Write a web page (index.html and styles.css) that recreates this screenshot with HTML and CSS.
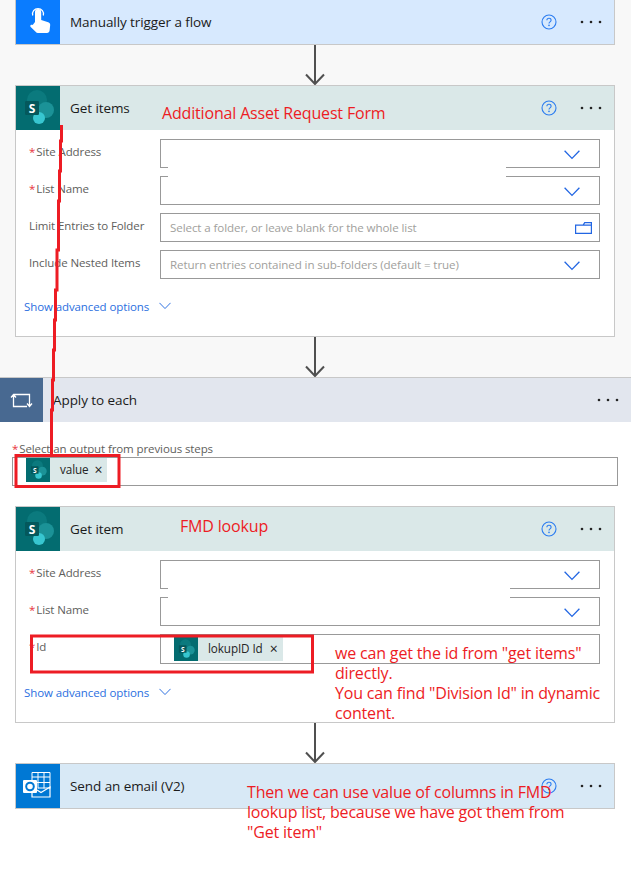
FILE: index.html
```html
<!DOCTYPE html>
<html lang="en">
<head>
<meta charset="utf-8">
<title>Flow</title>
<link rel="stylesheet" href="styles.css">
</head>
<body>
<svg class="defs" width="0" height="0" aria-hidden="true">
  <defs>
    <symbol id="sp" viewBox="0 0 44 44">
      <circle cx="21" cy="14" r="10" fill="#0b7a7e"/>
      <circle cx="30" cy="24" r="8" fill="#1b9297"/>
      <circle cx="23" cy="32" r="6" fill="#37c6d0"/>
      <rect x="9" y="15" width="14" height="14" rx="1.2" fill="#04585c"/>
      <text x="16" y="27" class="sp-s">S</text>
    </symbol>
    <symbol id="help" viewBox="0 0 16 16">
      <circle cx="8" cy="8" r="7" fill="none" stroke="#2b7cf0" stroke-width="1.1"/>
      <path d="M5.900 6.300c0-1.200.9-2 2.100-2s2.100.8 2.100 1.900c0 1.700-2.100 1.600-2.100 3.300" fill="none" stroke="#2b7cf0" stroke-width="1.100"/>
      <circle cx="8" cy="11.400" r=".8" fill="#2b7cf0"/>
    </symbol>
    <symbol id="chev" viewBox="0 0 16 10">
      <path d="M.6.8 8 8.400 15.400.8" fill="none" stroke="currentColor" stroke-width="1.300"/>
    </symbol>
    <symbol id="arrow" viewBox="0 0 20 40">
      <path d="M10 0v39M1 29.500 10 39l9-9.500" fill="none" stroke="#505050" stroke-width="2"/>
    </symbol>
  </defs>
</svg>

<main class="page">
  <section class="top">
    <article class="card card-first">
      <header class="head head-trigger">
        <span class="tile tile-trigger">
          <svg class="tile-svg" viewBox="0 0 44 44"><path d="M19 22V12a3.100 3.100 0 0 1 6.200 0v8l7 2.200c1.300.4 2 1.400 2 2.800l-.6 5.600c-.2 1.500-1.100 2.400-2.600 2.400H22c-1 0-1.800-.4-2.400-1.200L14.700 27c-.6-.8-.5-1.500 0-2s1.400-.5 2 0z" fill="#fff"/><path d="M16.700 15.500a5.500 5.500 0 1 1 10.600 0" fill="none" stroke="#fff" stroke-width="1.300"/></svg>
        </span>
        <h2 class="title">Manually trigger a flow</h2>
        <svg class="help"><use href="#help"/></svg>
        <span class="dots"><i></i><i></i><i></i></span>
      </header>
    </article>
    <svg class="arrow"><use href="#arrow"/></svg>

    <article class="card">
      <header class="head head-sp">
        <span class="tile tile-sp"><svg class="tile-svg"><use href="#sp"/></svg></span>
        <h2 class="title">Get items</h2>
        <svg class="help"><use href="#help"/></svg>
        <span class="dots"><i></i><i></i><i></i></span>
      </header>
      <div class="body body-long">
        <div class="row"><label class="label"><b>*</b>Site Address</label><div class="input"><svg class="chev"><use href="#chev"/></svg></div></div>
        <div class="row"><label class="label"><b>*</b>List Name</label><div class="input"><svg class="chev"><use href="#chev"/></svg></div></div>
        <div class="row"><label class="label">Limit Entries to Folder</label><div class="input"><span class="ph">Select a folder, or leave blank for the whole list</span>
          <svg class="folder" viewBox="0 0 17 12"><path d="M.6 11.400V3.100h7.500l1.600-2.400h6.700v10.700zM8.100 3.100h8.200" fill="none" stroke="#2266e3" stroke-width="1.200"/></svg></div></div>
        <div class="row"><label class="label">Include Nested Items</label><div class="input"><span class="ph">Return entries contained in sub-folders (default = true)</span><svg class="chev"><use href="#chev"/></svg></div></div>
        <a class="adv">Show advanced options<svg class="chev-small"><use href="#chev"/></svg></a>
      </div>
    </article>
    <svg class="arrow"><use href="#arrow"/></svg>
  </section>

  <section class="loop">
    <header class="loop-head">
      <span class="tile tile-loop">
        <svg class="tile-svg" viewBox="0 0 44 44"><path d="M13.500 17V28.500H27M11 19.500l2.500-3 2.500 3M14 16.500H29.500V28M27 25.500l2.500 3 2.500-3" fill="none" stroke="#fff" stroke-width="1.300"/></svg>
      </span>
      <h2 class="title title-loop">Apply to each</h2>
      <span class="dots"><i></i><i></i><i></i></span>
    </header>
    <div class="loop-body">
      <label class="label label-loop"><b>*</b>Select an output from previous steps</label>
      <div class="input input-wide">
        <span class="chip chip-a"><svg class="chip-icon"><use href="#sp"/></svg><span class="chip-text">value</span><span class="chip-x">×</span></span>
      </div>

      <article class="card card-inner">
        <header class="head head-sp">
          <span class="tile tile-sp"><svg class="tile-svg"><use href="#sp"/></svg></span>
          <h2 class="title">Get item</h2>
          <svg class="help"><use href="#help"/></svg>
          <span class="dots"><i></i><i></i><i></i></span>
        </header>
        <div class="body body-short">
          <div class="row"><label class="label"><b>*</b>Site Address</label><div class="input"><svg class="chev"><use href="#chev"/></svg></div></div>
          <div class="row"><label class="label"><b>*</b>List Name</label><div class="input"><svg class="chev"><use href="#chev"/></svg></div></div>
          <div class="row"><label class="label"><b>*</b>Id</label><div class="input input-chip">
            <span class="chip chip-b"><svg class="chip-icon"><use href="#sp"/></svg><span class="chip-text">lokupID Id</span><span class="chip-x">×</span></span>
          </div></div>
          <a class="adv">Show advanced options<svg class="chev-small"><use href="#chev"/></svg></a>
        </div>
      </article>
    </div>
    <svg class="arrow arrow-white"><use href="#arrow"/></svg>
    <article class="card card-mail">
      <header class="head head-mail">
        <span class="tile tile-mail">
          <svg class="tile-svg" viewBox="0 0 44 44"><path d="M16 8.500h18v16M22 8.500v16M28 8.500v16M16 8.500v8M16 13h18M16 18.500h18M22 24h12" fill="none" stroke="#fff" stroke-width="1"/><path d="M16 29v4h18V23l-9 5.500-4-2.500" fill="none" stroke="#fff" stroke-width="1.200"/><rect x="7" y="16" width="14" height="13" rx="1" fill="#fff"/><circle cx="14" cy="22.500" r="3.800" fill="none" stroke="#0078d4" stroke-width="2"/></svg>
        </span>
        <h2 class="title">Send an email (V2)</h2>
        <svg class="help"><use href="#help"/></svg>
        <span class="dots"><i></i><i></i><i></i></span>
      </header>
    </article>
  </section>

  <div class="mask mask-a"></div>
  <div class="mask mask-b"></div>
  <svg class="scribble" viewBox="0 0 633 876"><path d="M61.500 125V141H60.500V171H59.500V201H58.500V250H57V290H55.500V320H54.500V350H53.500V380H52.500V410H51.500V457" fill="none" stroke="#ed1c24" stroke-width="3"/><rect x="16" y="455.500" width="103" height="31" fill="none" stroke="#ed1c24" stroke-width="3"/><rect x="31.500" y="636" width="281" height="36" fill="none" stroke="#ed1c24" stroke-width="3"/></svg>
  <p class="note note-a">Additional Asset Request Form</p>
  <p class="note note-b">FMD lookup</p>
  <p class="note note-c">we can get the id from "get items"<br>directly.<br>You can find "Division Id" in dynamic<br>content.</p>
  <p class="note note-d">Then we can use value of columns in FMD<br>lookup list, because we have got them from<br>"Get item"</p>
</main>
</body>
</html>
```

FILE: styles.css
```css
* { box-sizing: border-box; }
html, body { margin: 0; padding: 0; background: #fff; }
body { font-family: "Open Sans", "Noto Sans", sans-serif; overflow: hidden; height: 876px; }
.defs { position: absolute; }
.sp-s { font: 700 12px "Open Sans", sans-serif; fill: #fff; text-anchor: middle; }

.page { position: relative; width: 631px; height: 876px; }
.top { background: #f8f8f8; padding: 0 16px 0 15px; display: flex; flex-direction: column; height: 377px; }
.loop { background: #fff; }

.card { width: 600px; border: 1px solid #c8c8c8; background: #fff; flex: none; }
.card-first { border-top: 0; height: 45px; }
.card-first .head { height: 44px; }
.arrow { display: block; width: 20px; height: 40px; margin: 0 0 0 290px; flex: none; }
.arrow-white { margin: 0 0 0 305px; }

.head { display: flex; align-items: center; height: 44px; }
.head-trigger { background: #d7e9fe; }
.head-sp { background: #dae8e8; }
.head-mail { background: #d8e9f6; }
.tile { width: 44px; height: 44px; flex: none; display: block; }
.tile-trigger { background: #0a7cff; }
.tile-sp { background: #036c70; }
.tile-mail { background: #0078d4; }
.tile-loop { background: #486991; width: 43px; }
.tile-svg { display: block; width: 44px; height: 44px; }
.title { margin: 0 0 0 10px; font-size: 13.500px; font-weight: 400; color: #1b1b1b; flex: 1; letter-spacing: -.08px; }
.help { width: 16px; height: 16px; margin-right: 24px; flex: none; }
.dots { display: flex; gap: 7px; margin-right: 13px; flex: none; }
.dots i { display: block; width: 2px; height: 2px; background: #252525; border-radius: 50%; box-shadow: 0 0 0 .3px #252525; }

.body { padding: 9px 14px 0 13px; }
.body-long { height: 206px; }
.body-short { height: 171px; }
.row { display: grid; grid-template-columns: 131px 440px; height: 29px; margin-bottom: 8px; }
.label { font-size: 11.500px; color: #605e5c; padding-top: 5px; line-height: 16px; white-space: nowrap; letter-spacing: -.1px; }
.label b { color: #e8323c; font-weight: 400; margin-right: 1px; }
.input { border: 1px solid #999; background: #fff; display: flex; align-items: center; position: relative; padding-left: 9px; }
.input-chip { height: 30px; padding-left: 13px; align-items: flex-start; padding-top: 2px; }
.ph { font-size: 11.600px; color: #a19f9d; white-space: nowrap; letter-spacing: -.1px; }
.chev { width: 16px; height: 10px; color: #2266e3; position: absolute; right: 19px; top: 10px; }
.folder { width: 17px; height: 12px; position: absolute; right: 7px; top: 8px; }
.adv { display: flex; align-items: center; font-size: 11.500px; color: #2b6fe0; margin: 19px 0 0 -5px; height: 16px; letter-spacing: -.1px; white-space: nowrap; }
.body-short .adv { margin-top: 21px; }
.chev-small { width: 12px; height: 8px; color: #2b6fe0; margin-left: 10px; margin-top: -1px; }

.loop-head { height: 45px; border-top: 1px solid #c8c8c8; background: #e2e6ee; display: flex; align-items: center; }
.title-loop { margin-left: 10px; }
.loop-body { padding: 0 0 0 12px; height: 301px; display: flex; flex-direction: column; }
.label-loop { padding: 20px 0 0 0; height: 35px; line-height: 14px; font-size: 11.500px; letter-spacing: -.1px; flex: none; }
.input-wide { width: 606px; height: 29px; padding-left: 13px; flex: none; align-items: flex-start; }
.chip { display: flex; align-items: center; height: 24px; background: #dae8e8; }
.chip-icon { width: 24px; height: 24px; background: #036c70; flex: none; }
.chip-text { font-size: 11.700px; color: #252525; margin-left: 10px; letter-spacing: -.1px; padding-bottom: 2px; }
.chip-x { font-size: 14px; line-height: 1; color: #252525; margin: 0 5px 0 7px; }
.chip-a .chip-x { margin: 0 4px 0 6px; }
.card-inner { margin: 20px 0 0 3px; height: 217px; flex: none; }
.card-mail { margin-left: 15px; height: 46px; }

.mask { position: absolute; background: #fff; }
.mask-a { left: 168px; top: 166px; width: 338px; height: 12px; }
.mask-b { left: 168px; top: 587px; width: 342px; height: 12px; }
.scribble { position: absolute; left: 0; top: 0; width: 633px; height: 876px; pointer-events: none; }
.note { position: absolute; margin: 0; color: #ed1c24; font-size: 16px; line-height: 20px; white-space: nowrap; letter-spacing: -.17px; }
.note-a { left: 162px; top: 103px; }
.note-b { left: 180px; top: 516px; }
.note-c { left: 335px; top: 643px; }
.note-d { left: 247px; top: 782px; }
```
